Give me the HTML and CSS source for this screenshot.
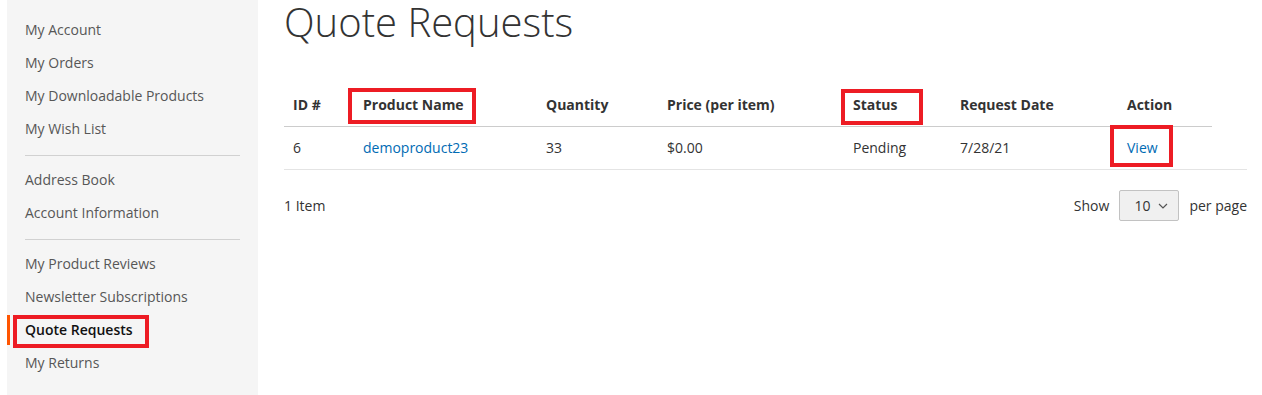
FILE: index.html
```html
<!DOCTYPE html>
<html>
  <head>
    <meta charset="utf-8" />
    <title>Quote Requests</title>
    <link rel="stylesheet" href="styles.css">
  </head>
  <body>
    <div class="page">
      <div class="sidebar">
        <ul class="nav">
          <li class="item"><a href="#">My Account</a></li>
          <li class="item"><a href="#">My Orders</a></li>
          <li class="item"><a href="#">My Downloadable Products</a></li>
          <li class="item"><a href="#">My Wish List</a></li>
          <li class="delimiter"></li>
          <li class="item"><a href="#">Address Book</a></li>
          <li class="item"><a href="#">Account Information</a></li>
          <li class="delimiter"></li>
          <li class="item"><a href="#">My Product Reviews</a></li>
          <li class="item"><a href="#">Newsletter Subscriptions</a></li>
          <li class="item current"><strong class="mark mark-nav">Quote Requests</strong></li>
          <li class="item"><a href="#">My Returns</a></li>
        </ul>
      </div>
      <div class="main">
        <h1 class="page-title">Quote Requests</h1>
        <table class="quotes">
          <thead>
            <tr>
              <th class="col-id">ID #</th>
              <th class="col-name"><span class="mark mark-name">Product Name</span></th>
              <th class="col-qty">Quantity</th>
              <th class="col-price">Price (per item)</th>
              <th class="col-status"><span class="mark mark-status">Status</span></th>
              <th class="col-date">Request Date</th>
              <th class="col-action">Action</th>
            </tr>
          </thead>
          <tbody>
            <tr>
              <td>6</td>
              <td><a href="#">demoproduct23</a></td>
              <td>33</td>
              <td>$0.00</td>
              <td>Pending</td>
              <td>7/28/21</td>
              <td><a href="#" class="mark mark-view">View</a></td>
            </tr>
          </tbody>
        </table>
        <div class="toolbar">
          <span class="amount">1 Item</span>
          <div class="limiter">
            <span>Show</span>
            <div class="limiter-box">
              <span>10</span>
              <svg width="10" height="6" viewBox="0 0 10 6"><path d="M1 1l4 4 4-4" fill="none" stroke="#555" stroke-width="1.2"/></svg>
            </div>
            <span>per page</span>
          </div>
        </div>
      </div>
    </div>
  </body>
</html>
```

FILE: styles.css
```css
html, body {
  margin: 0;
  height: 395px;
  overflow: hidden;
}
body {
  font-family: "Open Sans", sans-serif;
  font-size: 14px;
  line-height: 20px;
  color: #333;
}
a {
  color: #006bb4;
  text-decoration: none;
}
.page {
  display: flex;
  gap: 26px;
  padding: 0 15px 0 7px;
  height: 100%;
}
.sidebar {
  width: 251px;
  flex: none;
  background: #f5f5f5;
  padding-top: 15px;
}
.nav {
  list-style: none;
  margin: 0;
  padding: 0;
  display: flex;
  flex-direction: column;
  gap: 3px;
}
.nav .item {
  border-left: 3px solid transparent;
  padding: 5px 18px 5px 15px;
}
.nav .item a {
  color: #575757;
}
.nav .item.current {
  border-left-color: #ff5501;
}
.nav .item.current strong {
  color: #111;
  font-weight: 600;
}
.nav .delimiter {
  border-top: 1px solid #d1d1d1;
  margin: 8px 18px 6px;
}
.mark {
  position: relative;
}
.mark::after {
  content: "";
  position: absolute;
  border: 4px solid #ed1c24;
}
.mark-nav::after {
  top: -5px;
  bottom: -9px;
  left: -12px;
  right: -16px;
}
.mark-name::after {
  top: -7px;
  bottom: -10px;
  left: -15px;
  right: -12px;
}
.mark-status::after {
  top: -6px;
  bottom: -11px;
  left: -12px;
  right: -26px;
}
.mark-view::after {
  top: -13px;
  bottom: -10px;
  left: -17px;
  right: -15px;
}
.main {
  flex: 1;
}
.page-title {
  margin: 0 0 40px;
  font-size: 40px;
  line-height: 44px;
  font-weight: 300;
  color: #333;
}
.quotes {
  width: 100%;
  border-collapse: collapse;
}
.quotes th,
.quotes td {
  padding: 11px 9px;
  text-align: left;
  vertical-align: middle;
}
.quotes th {
  font-weight: 700;
  border-bottom: 1px solid #ccc;
}
.quotes th.col-action {
  border-bottom: 0;
  background: linear-gradient(#ccc, #ccc) left bottom / 94px 1px no-repeat;
}
.quotes td {
  border-bottom: 1px solid #e4e4e4;
}
.col-id { width: 52px; }
.col-name { width: 165px; }
.col-qty { width: 103px; }
.col-price { width: 168px; }
.col-status { width: 89px; }
.col-date { width: 149px; }
.toolbar {
  display: flex;
  justify-content: space-between;
  align-items: center;
  margin-top: 20px;
}
.limiter {
  display: flex;
  align-items: center;
  gap: 10px;
}
.limiter-box {
  display: flex;
  align-items: center;
  gap: 8px;
  box-sizing: border-box;
  width: 60px;
  height: 31px;
  padding: 0 10px 0 14px;
  background: #f0f0f0;
  border: 1px solid #c2c2c2;
  border-radius: 2px;
}
```
